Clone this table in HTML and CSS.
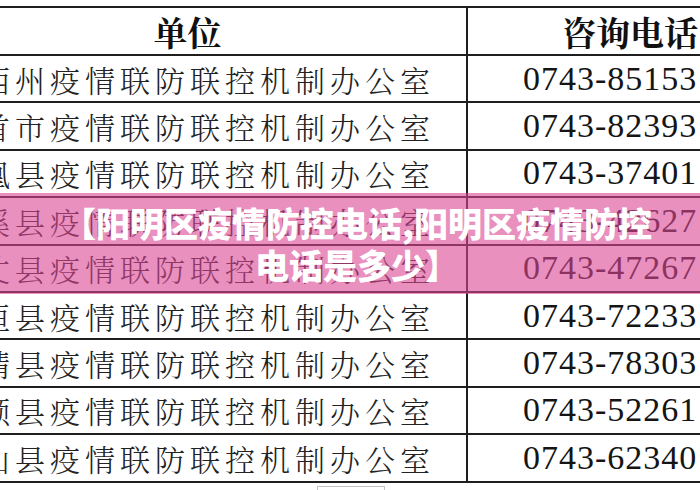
FILE: index.html
```html
<!DOCTYPE html>
<html lang="zh">
<head>
<meta charset="utf-8">
<link rel="stylesheet" href="styles.css">
</head>
<body>
<div class="page">
  <div class="table">
    <div class="row head">
      <div class="cell unit">单位</div>
      <div class="cell phone">咨询电话</div>
    </div>
    <div class="row"><div class="cell unit">湘西州疫情联防联控机制办公室</div><div class="cell phone num">0743-85153</div></div>
    <div class="row"><div class="cell unit">吉首市疫情联防联控机制办公室</div><div class="cell phone num">0743-82393</div></div>
    <div class="row"><div class="cell unit">凤凰县疫情联防联控机制办公室</div><div class="cell phone num">0743-37401</div></div>
    <div class="row"><div class="cell unit">泸溪县疫情联防联控机制办公室</div><div class="cell phone num">0743-42627</div></div>
    <div class="row"><div class="cell unit">古丈县疫情联防联控机制办公室</div><div class="cell phone num">0743-47267</div></div>
    <div class="row"><div class="cell unit">花垣县疫情联防联控机制办公室</div><div class="cell phone num">0743-72233</div></div>
    <div class="row"><div class="cell unit">保靖县疫情联防联控机制办公室</div><div class="cell phone num">0743-78303</div></div>
    <div class="row"><div class="cell unit">永顺县疫情联防联控机制办公室</div><div class="cell phone num">0743-52261</div></div>
    <div class="row"><div class="cell unit">龙山县疫情联防联控机制办公室</div><div class="cell phone num">0743-62340</div></div>
  </div>
  <div class="stub"></div>
  <div class="banner">
    <div class="banner-text">【阳明区疫情防控电话,阳明区疫情防控<br>电话是多少】</div>
  </div>
</div>
</body>
</html>
```
FILE: styles.css
```css
html, body {
  margin: 0;
  padding: 0;
  background: #ffffff;
}
body {
  width: 700px;
  height: 490px;
  overflow: hidden;
  position: relative;
}
.page {
  padding-top: 6px;
}
.table {
  margin-left: -91px;
  width: 886px;
  border-top: 2px solid #1e1e1e;
}
.row {
  display: grid;
  grid-template-columns: 559px 1fr;
  height: 47.4px;
  box-sizing: border-box;
  border-bottom: 2px solid #1e1e1e;
}
.row.head {
  height: 48px;
}
.cell {
  display: flex;
  align-items: center;
  white-space: nowrap;
  overflow: hidden;
  box-sizing: border-box;
}
.unit {
  justify-content: center;
  border-right: 2px solid #1e1e1e;
  font-family: "Noto Serif CJK SC", "Noto Sans CJK SC", sans-serif;
  font-weight: 300;
  font-size: 30px;
  letter-spacing: 5px;
  color: #222222;
  padding-left: 5px;
}
.phone {
  justify-content: flex-start;
  padding-left: 55px;
}
.num {
  font-family: "Liberation Serif", serif;
  font-size: 34px;
  letter-spacing: 1px;
  color: #151515;
}
.head .cell {
  font-family: "Noto Serif CJK SC", "Noto Sans CJK SC", sans-serif;
  font-weight: 700;
  font-size: 34px;
  letter-spacing: 0;
  color: #111111;
}
.head .unit {
  padding-left: 0;
}
.head .phone {
  padding-left: 94px;
}
.stub {
  margin-left: 317px;
  margin-top: 3px;
  width: 66px;
  height: 12px;
  border: 1px solid #c4c4c4;
  border-bottom: none;
}
.banner {
  position: absolute;
  left: 0;
  top: 193px;
  width: 700px;
  height: 101px;
  background: rgba(218, 70, 148, 0.6);
  display: flex;
  align-items: center;
  justify-content: center;
}
.banner-text {
  color: #ffffff;
  font-family: "Noto Sans CJK SC", sans-serif;
  font-weight: 900;
  font-size: 34px;
  line-height: 42px;
  text-align: center;
  padding-left: 14px;
}
```
